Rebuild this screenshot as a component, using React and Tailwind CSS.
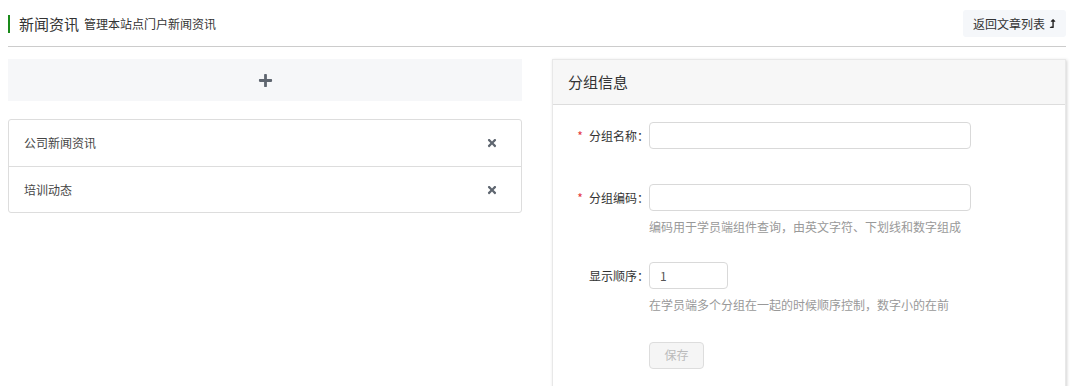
import { FaPlus, FaTimes, FaLevelUpAlt } from 'react-icons/fa'

const FONT = 'font-["Microsoft_YaHei","Noto_Sans_CJK_SC",sans-serif]'

const GROUPS = ['公司新闻资讯', '培训动态']

function Field({ label, required, width, value, hint, gap }) {
  return (
    <div className={gap}>
      <div className="flex items-center">
        <label className="w-[96px] shrink-0 text-right text-[12px] leading-[27px] text-[#333]">
          {required && <span className="mr-[6px] text-[#e4393c]">*</span>}
          {label}：
        </label>
        <input
          readOnly
          value={value || ''}
          className={`${width} h-[27px] rounded-[4px] border border-[#d9d9d9] bg-white px-[10px] text-[12px] text-[#555] outline-none`}
        />
      </div>
      {hint && <p className="ml-[96px] mt-[7px] text-[12px] leading-[17px] text-[#999]">{hint}</p>}
    </div>
  )
}

export default function App() {
  return (
    <div className={`${FONT} bg-white pl-2 pr-1 pt-[10px] text-[#333]`}>
      {/* page header */}
      <div className="flex items-center justify-between border-b border-[#cccccc] pb-[9px]">
        <div className="flex items-center">
          <span className="h-[18px] w-[2px] bg-[#1a8a1a]" />
          <h1 className="ml-[9px] text-[15px] leading-[20px] text-[#333]">新闻资讯</h1>
          <span className="ml-[5px] text-[12px] leading-[20px] text-[#333]">管理本站点门户新闻资讯</span>
        </div>
        <button className="flex h-[27px] items-center rounded-[3px] bg-[#f5f7fa] pl-[10px] pr-[9px] text-[12px] text-[#333]">
          返回文章列表
          <FaLevelUpAlt className="ml-[3px] text-[9px] text-[#222]" />
        </button>
      </div>

      <div className="mt-[12px] grid grid-cols-2 gap-[30px]">
        {/* group list */}
        <div>
          <button className="flex h-[42px] w-full items-center justify-center bg-[#f6f7f9] text-[#5f6670]">
            <FaPlus className="text-[15px]" />
          </button>
          <ul className="mt-[18px] rounded-[3px] border border-[#dddddd]">
            {GROUPS.map((g, i) => (
              <li
                key={g}
                className={`flex h-[46px] items-center justify-between pl-[15px] pr-[23px] text-[12px] text-[#444] ${i ? 'border-t border-[#dddddd]' : ''}`}
              >
                {g}
                <FaTimes className="text-[12px] text-[#5f6670]" />
              </li>
            ))}
          </ul>
        </div>

        {/* group form */}
        <div className="border border-[#e8e8e8] shadow-[1px_1px_3px_rgba(0,0,0,0.18)]">
          <div className="flex h-[45px] items-center border-b border-[#dddddd] bg-[#f7f7f7] pl-[15px] text-[15px] text-[#333]">
            分组信息
          </div>
          <div className="pb-[40px] pt-[17px]">
            <Field label="分组名称" required width="w-[322px]" gap="mb-[35px]" />
            <Field
              label="分组编码"
              required
              width="w-[322px]"
              gap="mb-[27px]"
              hint="编码用于学员端组件查询，由英文字符、下划线和数字组成"
            />
            <Field
              label="显示顺序"
              width="w-[79px]"
              value="1"
              gap="mb-[28px]"
              hint="在学员端多个分组在一起的时候顺序控制，数字小的在前"
            />
            <div className="ml-[96px]">
              <button className="h-[27px] w-[55px] rounded-[4px] border border-[#dddddd] bg-[#f5f5f5] text-[12px] text-[#bbb]">
                保存
              </button>
            </div>
          </div>
        </div>
      </div>
    </div>
  )
}
